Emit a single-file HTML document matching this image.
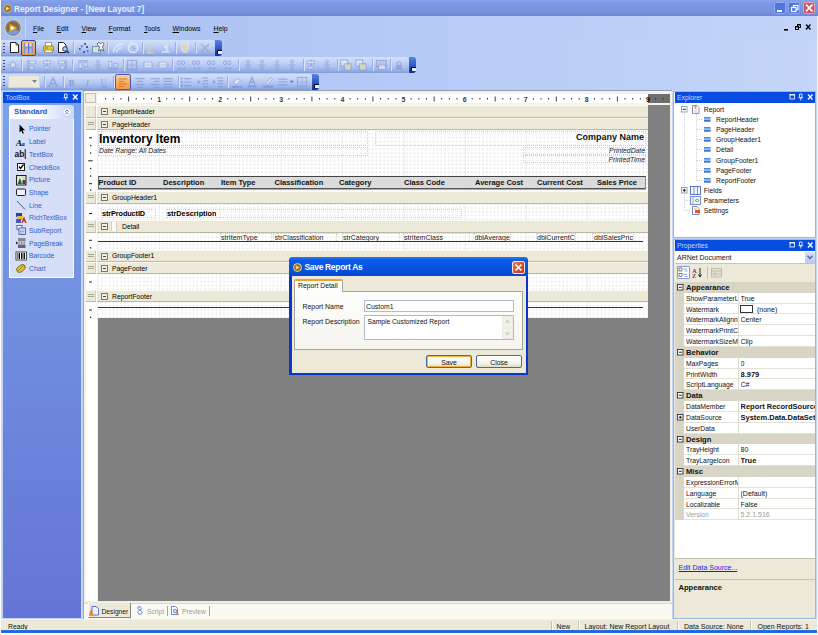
<!DOCTYPE html>
<html><head><meta charset="utf-8"><title>Report Designer</title>
<style>
*{box-sizing:border-box;margin:0;padding:0}
html,body{width:818px;height:635px;overflow:hidden;background:#fff}
body{position:relative;font-family:"Liberation Sans","DejaVu Sans",sans-serif;font-size:7px;color:#000;line-height:1}
.a{position:absolute}
.t{position:absolute;white-space:nowrap;line-height:9px}
u{text-decoration:underline}
svg{position:absolute;overflow:visible}
/* frame */
#title{left:1px;top:0;width:817px;height:16px;background:linear-gradient(#87a3ea 0,#7e9ae4 3px,#7995e1 8px,#7791df 12px,#6f89d8 15px,#6b85d4 16px)}
#title .t{left:13px;top:4.500px;color:#e8eefc;font-weight:bold;font-size:8.25px;line-height:10px}
.wb{position:absolute;top:2px;width:12px;height:12px;border-radius:2px;border:1px solid #93a8ea}
#menubar{left:1px;top:16px;width:817px;height:24px;background:linear-gradient(90deg,#a9c0f3,#b6caf6 50%,#c2d4f8)}
#menubar .t{top:8px;font-size:6.9px}
#tbarea{left:1px;top:40px;width:817px;height:51px;background:linear-gradient(90deg,#a9c0f3,#b6caf6 50%,#c4d5f8)}
.tb{position:absolute;left:0;height:16px;border-radius:0 2px 2px 0;background:linear-gradient(#d3e0fb,#c4d4f8 30%,#b0c4f1 60%,#97afe6 85%,#7e99db)}
.tbend{position:absolute;width:7px;height:16px;border-radius:0 3px 3px 0;background:linear-gradient(#5c83dd,#2f5bc9 50%,#0d2f9e)}
.tbend:after{content:"";position:absolute;left:2px;top:10px;width:4px;height:3px;background:#fff;border-top:1px solid #000;border-left:1px solid #000;opacity:.9}
.grip{position:absolute;left:2px;width:2px;height:11px;background:repeating-linear-gradient(#3a4f8f 0,#3a4f8f 1px,transparent 1px,transparent 3px)}
.sep{position:absolute;width:1px;height:12px;background:#98aee2;box-shadow:1px 0 0 #d8e3fa}
.di{position:absolute;width:10px;height:10px;opacity:.55}
.bh{background:#ece9d8;border-top:1px solid #fbfaf5;border-bottom:1px solid #bdb9a6}
.bhl{background:#ece9d8;border-top:1px solid #fbfaf5;border-bottom:1px solid #bdb9a6;border-right:1px solid #d0ccba}
.cb{width:7px;height:7px;border:1px solid #7b7868;background:#f4f2e6}
.cb:after{content:"";position:absolute;left:1px;top:2px;width:3px;height:1px;background:#444}
.ol{border:1px dotted #cfcfcf}
.hd{top:177.500px;font-size:7.500px;font-weight:bold;line-height:10px;color:#111}
.dt{top:233px;font-size:7px;line-height:9px;height:7.600px;overflow:hidden;color:#222}
.ss{top:621px;width:1px;height:9px;background:#c5c2b2;box-shadow:1px 0 0 #fff}
.dic{transform:scale(1.15);transform-origin:5px 5px}
</style></head><body>
<div id="title" class="a"><div class="t">Report Designer - [New Layout 7]</div>
<svg style="left:2px;top:3.5px" width="9" height="9"><circle cx="4.5" cy="4.5" r="4" fill="#8f6a3a" stroke="#d9c9a0" stroke-width=".8"/><path d="M2.8 2.3 L7.2 4.5 L2.8 6.7Z" fill="#ffb400"/><circle cx="4.2" cy="4.5" r="1.1" fill="#fff6c0"/></svg>
<div class="wb" style="left:773px;background:#4d75de"></div>
<div class="wb" style="left:787px;background:#4d75de"></div>
<div class="wb" style="left:802px;background:#c95563;border-color:#dba3ad"></div>
<svg style="left:773px;top:2px" width="42" height="12"><rect x="3" y="8" width="5" height="2" fill="#fff"/><rect x="19.5" y="3.5" width="4.5" height="4" fill="none" stroke="#fff" stroke-width="1.2"/><rect x="17.500" y="5.500" width="4.500" height="4" fill="#4d75de" stroke="#fff" stroke-width="1.200"/><path d="M32 2.500 L38.500 9.500 M38.500 2.500 L32 9.500" stroke="#fff" stroke-width="1.800"/></svg>
</div>
<div id="menubar" class="a">
<div class="t" style="left:32px"><u>F</u>ile</div>
<div class="t" style="left:55.500px"><u>E</u>dit</div>
<div class="t" style="left:80.500px"><u>V</u>iew</div>
<div class="t" style="left:107.500px"><u>F</u>ormat</div>
<div class="t" style="left:143px"><u>T</u>ools</div>
<div class="t" style="left:171.500px"><u>W</u>indows</div>
<div class="t" style="left:212.500px"><u>H</u>elp</div>
<div class="a" style="left:24px;top:2px;width:1px;height:20px;background:#c9d8f8"></div>
<svg style="left:3px;top:3px" width="18" height="18"><circle cx="9" cy="9" r="8.300" fill="#6d7fae" stroke="#d8cdb0" stroke-width="1.200"/><circle cx="9" cy="9" r="6.800" fill="#7d6a52" stroke="#a08a60" stroke-width=".8"/><path d="M3.500 13.500 A7 7 0 0 0 15 12 L9 9Z" fill="#6f9fe8"/><path d="M5.500 4.500 L14 9 L5.500 13Z" fill="#f28c00"/><path d="M6.500 6.500 L11.500 9 L6.500 11.500Z" fill="#ffe27a"/><circle cx="8" cy="9" r="1.500" fill="#fffbe0"/></svg>
<svg style="left:781px;top:7px" width="30" height="10"><rect x="2" y="6" width="4" height="1.6" fill="#000"/><rect x="15.5" y="1.5" width="3" height="3" fill="none" stroke="#000" stroke-width="1"/><rect x="15" y="1" width="4" height="1.5" fill="#000"/><rect x="13.5" y="3.5" width="3" height="3" fill="#c2d4f8" stroke="#000" stroke-width="1"/><rect x="13" y="3" width="4" height="1.5" fill="#000"/><path d="M24 1.500 L28.500 6.500 M28.500 1.500 L24 6.500" stroke="#000" stroke-width="1.300"/></svg>
</div>
<div id="tbarea" class="a">
<div class="tb" style="top:0;width:214px"></div><div class="tbend" style="left:214px;top:0"></div><div class="grip" style="top:3px"></div>
<div class="tb" style="top:17px;width:408px"></div><div class="tbend" style="left:408px;top:17px"></div><div class="grip" style="top:20px"></div>
<div class="tb" style="top:33.500px;width:311px"></div><div class="tbend" style="left:311px;top:33.500px"></div><div class="grip" style="top:36px"></div>
<!-- row1 icons -->
<svg style="left:9px;top:2px" width="10" height="11"><path d="M.5 .5 H6 L8.500 3 V10.500 H.5Z" fill="#fff" stroke="#222" stroke-width="1"/><path d="M6 .5 V3 H8.500" fill="none" stroke="#222" stroke-width=".8"/></svg>
<div class="a" style="left:20px;top:0;width:15px;height:16px;border:1px solid #34489f;border-radius:2px;background:linear-gradient(#f9b772,#f3923c);"></div>
<svg style="left:23px;top:3px" width="9" height="10"><rect x="0" y="0" width="9" height="10" fill="#8796cc"/><rect x="1.500" y="0" width="6" height="3.500" fill="#dfe5f6"/><rect x="1.500" y="5.500" width="6" height="4.500" fill="#aebbe4"/><rect x="4" y="0" width="1.300" height="10" fill="#6474bb"/></svg>
<svg style="left:42px;top:2px" width="11" height="11"><rect x="2.500" y=".5" width="6" height="4" fill="#fff" stroke="#8a8a6a" stroke-width=".8"/><rect x=".5" y="4" width="10" height="5" rx="1" fill="#e8c83a" stroke="#8a7a20" stroke-width=".8"/><rect x="2" y="8" width="7" height="2.500" fill="#fffbe0" stroke="#8a7a20" stroke-width=".6"/><rect x="2" y="5.500" width="3" height="1" fill="#3aa860"/></svg>
<svg style="left:57px;top:2px" width="12" height="12"><path d="M.5 .5 H5.500 L8 3 V10.500 H.5Z" fill="#fff" stroke="#222" stroke-width="1"/><circle cx="7" cy="7" r="2.300" fill="#9fd8f0" stroke="#224" stroke-width=".9"/><path d="M8.700 8.700 L11 11" stroke="#224" stroke-width="1.300"/></svg>
<div class="sep" style="left:72px;top:2px"></div>
<svg style="left:77px;top:3px" width="11" height="11"><g fill="#4a56a8"><rect x="6" y="0" width="2" height="2"/><rect x="8" y="3" width="2" height="2"/><rect x="1" y="5" width="2" height="2"/><rect x="5" y="8" width="2" height="2"/><rect x="9" y="7" width="1.500" height="1.500"/><rect x="3" y="2.500" width="1.500" height="1.500"/></g><path d="M2 6 L7 1 M2 6 L6 9" stroke="#9aa4d8" stroke-width=".6" fill="none"/></svg>
<svg style="left:91px;top:1px" width="13" height="13"><rect x=".5" y="5.500" width="8" height="6.500" fill="#cfe6e8" stroke="#5f8a94" stroke-width=".8"/><path d="M5 3 L7 1 L8.500 3 L10.500 1 L12 3 L10.500 6 L12 10 L9 8.500 L6.500 10 L7.500 6Z" fill="#f4f4f4" stroke="#555" stroke-width=".8"/></svg>

<div class="sep" style="left:106px;top:2px"></div>
<svg class="dic" style="left:112px;top:3px" width="10" height="10"><path d="M1 9 A7 7 0 0 1 9 2 M3.500 9 A4.500 4.500 0 0 1 8 5" fill="none" stroke="#e6edfb" stroke-width="1.300" opacity=".8"/></svg>
<svg class="dic" style="left:127px;top:3px" width="10" height="10"><circle cx="5" cy="5" r="4" fill="none" stroke="#e6edfb" stroke-width="1.300" opacity=".8"/><path d="M5 3 V5.500 H7" stroke="#8499cf" stroke-width=".8" fill="none" opacity=".7"/></svg>
<div class="sep" style="left:140.5px;top:2px"></div>
<svg class="dic" style="left:145px;top:3px" width="10" height="10"><path d="M3 1 V9 M1.500 9 H8" stroke="#d9cfa8" stroke-width="1.500" opacity=".8" fill="none"/></svg>
<svg class="dic" style="left:159px;top:3px" width="10" height="10"><path d="M2 8.500 H9 M6.500 2 V8.500 M4 4 H6.500" stroke="#e6edfb" stroke-width="1.400" opacity=".8" fill="none"/></svg>
<div class="sep" style="left:174px;top:2px"></div>
<svg class="dic" style="left:179px;top:3px" width="10" height="10"><path d="M2 1 H8 V6 A3 3 0 0 1 2 6Z" fill="#e8dca8" stroke="#e6edfb" stroke-width=".8" opacity=".7"/></svg>
<div class="sep" style="left:193.5px;top:2px"></div>
<svg class="dic" style="left:199px;top:3px" width="10" height="10"><path d="M1.500 1.500 L8.500 8.500 M8.500 1.500 L1.500 8.500" stroke="#93a3cc" stroke-width="1.200" opacity=".8"/></svg>
<svg class="dic" style="left:7px;top:20px" width="10" height="10"><circle cx="5" cy="5" r="2.300" fill="#e6edfb" stroke="#8499cf" stroke-width=".8" opacity=".7"/><path d="M5 0 V2 M5 8 V10 M0 5 H2 M8 5 H10 M1.500 1.500 L3 3 M7 7 L8.500 8.500 M8.500 1.500 L7 3 M1.500 8.500 L3 7" stroke="#8499cf" stroke-width=".7" opacity=".6"/></svg>
<div class="sep" style="left:20px;top:19px"></div>
<svg class="dic" style="left:26px;top:20px" width="10" height="10"><path d="M1.500 .5 V9.500" stroke="#8499cf" stroke-width="1" opacity=".75"/><rect x="3" y="1.500" width="5" height="2.500" fill="#e6edfb" stroke="#8499cf" stroke-width=".7" opacity=".7"/><rect x="3" y="6" width="3.500" height="2.500" fill="#e6edfb" stroke="#8499cf" stroke-width=".7" opacity=".7"/></svg>
<svg class="dic" style="left:41px;top:20px" width="10" height="10"><path d="M5 .5 V9.500" stroke="#8499cf" stroke-width="1" opacity=".75"/><rect x="2" y="1.500" width="6" height="2.500" fill="#e6edfb" stroke="#8499cf" stroke-width=".7" opacity=".7"/><rect x="3" y="6" width="4" height="2.500" fill="#e6edfb" stroke="#8499cf" stroke-width=".7" opacity=".7"/></svg>
<svg class="dic" style="left:56px;top:20px" width="10" height="10"><path d="M8.500 .5 V9.500" stroke="#8499cf" stroke-width="1" opacity=".75"/><rect x="2" y="1.500" width="5" height="2.500" fill="#e6edfb" stroke="#8499cf" stroke-width=".7" opacity=".7"/><rect x="3.500" y="6" width="3.500" height="2.500" fill="#e6edfb" stroke="#8499cf" stroke-width=".7" opacity=".7"/></svg>
<div class="sep" style="left:71px;top:19px"></div>
<svg class="dic" style="left:77px;top:20px" width="10" height="10"><path d="M.5 1.500 H9.500" stroke="#8499cf" stroke-width="1" opacity=".75"/><rect x="1.500" y="3" width="2.500" height="5" fill="#e6edfb" stroke="#8499cf" stroke-width=".7" opacity=".7"/><rect x="6" y="3" width="2.500" height="3.500" fill="#e6edfb" stroke="#8499cf" stroke-width=".7" opacity=".7"/></svg>
<svg class="dic" style="left:92px;top:20px" width="10" height="10"><circle cx="5" cy="2" r="1.300" fill="none" stroke="#8499cf" stroke-width=".7" opacity=".75"/><circle cx="5" cy="8" r="1.300" fill="none" stroke="#8499cf" stroke-width=".7" opacity=".75"/><path d="M5 3.500 V6.500 M2 5 H8" stroke="#8499cf" stroke-width=".7" opacity=".7"/></svg>
<svg class="dic" style="left:107px;top:20px" width="10" height="10"><path d="M.5 8.500 H9.500" stroke="#8499cf" stroke-width="1" opacity=".75"/><rect x="1.500" y="2" width="2.500" height="5" fill="#e6edfb" stroke="#8499cf" stroke-width=".7" opacity=".7"/><rect x="6" y="3.500" width="2.500" height="3.500" fill="#e6edfb" stroke="#8499cf" stroke-width=".7" opacity=".7"/></svg>
<div class="sep" style="left:121.5px;top:19px"></div>
<svg class="dic" style="left:126px;top:20px" width="10" height="10"><rect x="1" y="1" width="8" height="8" fill="none" stroke="#8499cf" stroke-width=".9" opacity=".7"/><path d="M1 5 H9 M5 1 V9" stroke="#8499cf" stroke-width=".7" opacity=".6"/></svg>
<svg class="dic" style="left:142px;top:20px" width="10" height="10"><rect x="1.500" y="2.500" width="7" height="5" fill="#e6edfb" stroke="#8499cf" stroke-width=".8" opacity=".7" stroke-dasharray="1.500 1"/><path d="M0 5 H10" stroke="#8499cf" stroke-width=".6" opacity=".6"/></svg>
<svg class="dic" style="left:157px;top:20px" width="10" height="10"><rect x="1.500" y="2.500" width="7" height="5" fill="#e6edfb" stroke="#8499cf" stroke-width=".8" opacity=".7" stroke-dasharray="1.500 1"/><path d="M0 5 H10" stroke="#8499cf" stroke-width=".6" opacity=".6"/></svg>
<div class="sep" style="left:171px;top:19px"></div>
<svg class="dic" style="left:176px;top:20px" width="10" height="10"><ellipse cx="2.300" cy="3" rx="1.300" ry="1.800" fill="none" stroke="#8499cf" stroke-width=".7" opacity=".85"/><ellipse cx="6" cy="3" rx="1.300" ry="1.800" fill="none" stroke="#8499cf" stroke-width=".7" opacity=".85"/><path d="M2 8 L3.500 6.500 M2 8 L3.500 9.500 M2 8 H8 M8 8 L6.500 6.500 M8 8 L6.500 9.500" stroke="#8499cf" stroke-width=".6" opacity=".7" fill="none"/></svg>
<svg class="dic" style="left:191px;top:20px" width="10" height="10"><ellipse cx="2.300" cy="3" rx="1.300" ry="1.800" fill="none" stroke="#8499cf" stroke-width=".7" opacity=".85"/><ellipse cx="6" cy="3" rx="1.300" ry="1.800" fill="none" stroke="#8499cf" stroke-width=".7" opacity=".85"/><path d="M2 8 L3.500 6.500 M2 8 L3.500 9.500 M2 8 H8 M8 8 L6.500 6.500 M8 8 L6.500 9.500" stroke="#8499cf" stroke-width=".6" opacity=".7" fill="none"/></svg>
<svg class="dic" style="left:206px;top:20px" width="10" height="10"><ellipse cx="2.300" cy="3" rx="1.300" ry="1.800" fill="none" stroke="#8499cf" stroke-width=".7" opacity=".85"/><ellipse cx="6" cy="3" rx="1.300" ry="1.800" fill="none" stroke="#8499cf" stroke-width=".7" opacity=".85"/><path d="M2 8 L3.500 6.500 M2 8 L3.500 9.500 M2 8 H8 M8 8 L6.500 6.500 M8 8 L6.500 9.500" stroke="#8499cf" stroke-width=".6" opacity=".7" fill="none"/></svg>
<svg class="dic" style="left:222px;top:20px" width="10" height="10"><ellipse cx="2.300" cy="3" rx="1.300" ry="1.800" fill="none" stroke="#8499cf" stroke-width=".7" opacity=".85"/><ellipse cx="6" cy="3" rx="1.300" ry="1.800" fill="none" stroke="#8499cf" stroke-width=".7" opacity=".85"/><path d="M2 8 L3.500 6.500 M2 8 L3.500 9.500 M2 8 H8 M8 8 L6.500 6.500 M8 8 L6.500 9.500" stroke="#8499cf" stroke-width=".6" opacity=".7" fill="none"/></svg>
<div class="sep" style="left:236.5px;top:19px"></div>
<svg class="dic" style="left:242px;top:20px" width="10" height="10"><circle cx="5" cy="2" r="1.300" fill="none" stroke="#8499cf" stroke-width=".7" opacity=".75"/><circle cx="5" cy="8" r="1.300" fill="none" stroke="#8499cf" stroke-width=".7" opacity=".75"/><path d="M5 3.500 V6.500 M2 5 H8" stroke="#8499cf" stroke-width=".7" opacity=".7"/></svg>
<svg class="dic" style="left:256px;top:20px" width="10" height="10"><circle cx="5" cy="2" r="1.300" fill="none" stroke="#8499cf" stroke-width=".7" opacity=".75"/><circle cx="5" cy="8" r="1.300" fill="none" stroke="#8499cf" stroke-width=".7" opacity=".75"/><path d="M5 3.500 V6.500 M2 5 H8" stroke="#8499cf" stroke-width=".7" opacity=".7"/></svg>
<svg class="dic" style="left:271px;top:20px" width="10" height="10"><circle cx="5" cy="2" r="1.300" fill="none" stroke="#8499cf" stroke-width=".7" opacity=".75"/><circle cx="5" cy="8" r="1.300" fill="none" stroke="#8499cf" stroke-width=".7" opacity=".75"/><path d="M5 3.500 V6.500 M2 5 H8" stroke="#8499cf" stroke-width=".7" opacity=".7"/></svg>
<svg class="dic" style="left:286px;top:20px" width="10" height="10"><circle cx="5" cy="2" r="1.300" fill="none" stroke="#8499cf" stroke-width=".7" opacity=".75"/><circle cx="5" cy="8" r="1.300" fill="none" stroke="#8499cf" stroke-width=".7" opacity=".75"/><path d="M5 3.500 V6.500 M2 5 H8" stroke="#8499cf" stroke-width=".7" opacity=".7"/></svg>
<div class="sep" style="left:301.5px;top:19px"></div>
<svg class="dic" style="left:305px;top:20px" width="10" height="10"><path d="M5 .5 V9.500" stroke="#8499cf" stroke-width="1" opacity=".75"/><rect x="2" y="1.500" width="6" height="2.500" fill="#e6edfb" stroke="#8499cf" stroke-width=".7" opacity=".7"/><rect x="3" y="6" width="4" height="2.500" fill="#e6edfb" stroke="#8499cf" stroke-width=".7" opacity=".7"/></svg>
<svg class="dic" style="left:321px;top:20px" width="10" height="10"><circle cx="5" cy="2" r="1.300" fill="none" stroke="#8499cf" stroke-width=".7" opacity=".75"/><circle cx="5" cy="8" r="1.300" fill="none" stroke="#8499cf" stroke-width=".7" opacity=".75"/><path d="M5 3.500 V6.500 M2 5 H8" stroke="#8499cf" stroke-width=".7" opacity=".7"/></svg>
<div class="sep" style="left:336px;top:19px"></div>
<svg class="dic" style="left:340px;top:20px" width="10" height="10"><rect x=".5" y=".5" width="6" height="5.500" fill="#e6edfb" stroke="#8499cf" stroke-width=".9" opacity=".7"/><rect x="3.500" y="4" width="6" height="5.500" fill="#e6e0b0" stroke="#8499cf" stroke-width=".9" opacity=".7"/></svg>
<svg class="dic" style="left:355px;top:20px" width="10" height="10"><rect x=".5" y=".5" width="6" height="5.500" fill="#e6edfb" stroke="#8499cf" stroke-width=".9" opacity=".7"/><rect x="3.500" y="4" width="6" height="5.500" fill="#e6e0b0" stroke="#8499cf" stroke-width=".9" opacity=".7"/></svg>
<div class="sep" style="left:370.5px;top:19px"></div>
<svg class="dic" style="left:375px;top:20px" width="10" height="10"><rect x="1" y="1" width="8.500" height="5.500" fill="#cdb8d8" stroke="#8499cf" stroke-width=".8" opacity=".7"/><rect x="3" y="5" width="6" height="4" fill="#e6edfb" stroke="#8499cf" stroke-width=".7" opacity=".7"/></svg>
<div class="sep" style="left:389px;top:19px"></div>
<svg class="dic" style="left:393px;top:20px" width="10" height="10"><rect x="2.500" y="5" width="5" height="4" fill="#8499cf" opacity=".7"/><path d="M3.500 5 V3.500 A1.500 1.500 0 0 1 6.500 3.500 V5" fill="none" stroke="#8499cf" stroke-width=".8" opacity=".7"/></svg>
<div class="sep" style="left:42.5px;top:35.5px"></div>
<svg class="dic" style="left:47px;top:36.5px" width="10" height="10"><path d="M1.500 9 L5 1.500 L8.500 9 M3 6.500 H7" stroke="#8499cf" stroke-width="1.100" fill="none" opacity=".8"/></svg>
<div class="sep" style="left:61.5px;top:35.5px"></div>
<svg class="dic" style="left:66px;top:36.5px" width="10" height="10"><text x="2" y="8.500" font-size="8" font-weight="bold" fill="#8499cf" opacity=".85" font-family="Liberation Serif,serif">B</text></svg>
<svg class="dic" style="left:82px;top:36.5px" width="10" height="10"><text x="3" y="8.500" font-size="8" font-style="italic" fill="#8499cf" opacity=".85" font-family="Liberation Serif,serif">I</text></svg>
<svg class="dic" style="left:98px;top:36.5px" width="10" height="10"><text x="2" y="8" font-size="7.500" fill="#8499cf" opacity=".85" font-family="Liberation Serif,serif" text-decoration="underline">U</text><path d="M2 9.500 H8" stroke="#8499cf" stroke-width=".7" opacity=".8"/></svg>
<div class="sep" style="left:111.5px;top:35.5px"></div>
<svg class="dic" style="left:134px;top:36.5px" width="10" height="10"><path d="M1 2 H9 M2.500 4.500 H7.500 M1 7 H9 M2.500 9.500 H7.500" stroke="#8499cf" stroke-width="1" opacity=".75"/></svg>
<svg class="dic" style="left:149px;top:36.5px" width="10" height="10"><path d="M1 2 H9 M4 4.500 H9 M1 7 H9 M4 9.500 H9" stroke="#8499cf" stroke-width="1" opacity=".75"/></svg>
<svg class="dic" style="left:162px;top:36.5px" width="10" height="10"><path d="M1 2 H9 M1 4.500 H9 M1 7 H9 M1 9.500 H9" stroke="#8499cf" stroke-width="1" opacity=".75"/></svg>
<div class="sep" style="left:176.5px;top:35.5px"></div>
<svg class="dic" style="left:180px;top:36.5px" width="10" height="10"><path d="M3.500 2 H9.500 M3.500 5 H9.500 M3.500 8 H9.500" stroke="#8499cf" stroke-width="1" opacity=".8"/><path d="M.5 2 H2 M.5 5 H2 M.5 8 H2" stroke="#6f83c4" stroke-width="1.200" opacity=".8"/></svg>
<svg class="dic" style="left:197px;top:36.5px" width="10" height="10"><path d="M4 1.500 H9.500 M5 4 H9.500 M4 6.500 H9.500 M5 9 H9.500" stroke="#8499cf" stroke-width="1" opacity=".8"/><path d="M.5 3 L3 5 L.5 7Z" fill="#8499cf" opacity=".8"/></svg>
<svg class="dic" style="left:212px;top:36.5px" width="10" height="10"><path d="M4 1.500 H9.500 M5 4 H9.500 M4 6.500 H9.500 M5 9 H9.500" stroke="#8499cf" stroke-width="1" opacity=".8"/><path d="M.5 3 L3 5 L.5 7Z" fill="#8499cf" opacity=".8"/></svg>
<div class="sep" style="left:225.5px;top:35.5px"></div>
<svg class="dic" style="left:231px;top:36.5px" width="10" height="10"><path d="M2 5 L5.500 1.500 L8 4 L4.500 7.500Z" fill="#e6edfb" stroke="#8499cf" stroke-width=".8" opacity=".8"/><rect x=".5" y="8.500" width="9" height="1.500" fill="#7b8fe0" opacity=".8"/></svg>
<svg class="dic" style="left:246px;top:36.5px" width="10" height="10"><path d="M2.500 7 L5 1 L7.500 7 M3.500 5 H6.500" stroke="#8499cf" stroke-width="1" fill="none" opacity=".85"/><rect x="1" y="8" width="8" height="1.800" fill="#8499cf" opacity=".8"/></svg>
<svg class="dic" style="left:262px;top:36.5px" width="10" height="10"><path d="M3 6.500 L7.500 1 L9 2.500 L4.500 7.500Z" fill="#e6edfb" stroke="#8499cf" stroke-width=".7" opacity=".8"/><rect x=".5" y="8" width="9" height="2" fill="#8499cf" opacity=".85"/></svg>
<svg class="dic" style="left:278px;top:36.5px" width="14" height="10"><path d="M0 2.500 H8 M0 5 H8 M0 7.500 H8" stroke="#8499cf" stroke-width="1" opacity=".75"/><path d="M10 4 H13.500 L11.750 6Z" fill="#55659a" opacity=".85"/></svg>
<svg class="dic" style="left:296px;top:36.5px" width="10" height="10"><rect x="1" y="1" width="8" height="8" fill="none" stroke="#8499cf" stroke-width=".9" opacity=".7"/><path d="M1 5 H9 M5 1 V9" stroke="#8499cf" stroke-width=".7" opacity=".6"/></svg>
<div class="a" style="left:7px;top:34.500px;width:32px;height:13px;background:#ece9d8;border:1px solid #c8d3ee"></div>
<svg style="left:31px;top:39.500px" width="6" height="4"><path d="M0 0 H5 L2.500 3Z" fill="#7f7f8f"/></svg>
<div class="a" style="left:114px;top:33.500px;width:16px;height:16px;border:1px solid #4a5fb0;border-radius:2px;background:linear-gradient(#fbcf9e,#f6a85c 60%,#f29a44)"></div>
<svg style="left:117px;top:36.500px" width="10" height="10"><path d="M1 2 H9 M1 4.500 H6 M1 7 H9 M1 9.500 H6" stroke="#d9772a" stroke-width="1" opacity=".9"/></svg>

</div>
<div class="a" style="left:1px;top:91px;width:82px;height:528px;background:#c4d5f8"></div>
<div class="a" style="left:3px;top:92px;width:78px;height:526px;background:linear-gradient(#7ba2e7,#6375d6)"></div>
<div class="a" style="left:3px;top:92px;width:78px;height:11px;background:#074ce0"></div>
<div class="t" style="left:5.500px;top:93px;color:#c9d9fb;font-size:6.800px">ToolBox</div>
<svg style="left:62px;top:93px" width="18" height="9"><path d="M2.500 1 H5 V4.500 H2.500Z M1.500 4.800 H6 M3.750 5 V7.500" stroke="#e8eefc" stroke-width=".9" fill="none"/><path d="M11 1.500 L15.500 6.500 M15.500 1.500 L11 6.500" stroke="#fff" stroke-width="1.300"/></svg>
<div class="a" style="left:9px;top:105px;width:65px;height:14px;border-radius:3px 3px 0 0;background:linear-gradient(90deg,#fff,#fff 40%,#c9d6f8)"></div>
<div class="a" style="left:9px;top:119px;width:65px;height:159px;background:#d6dff7;border:1px solid #fff;border-top:none"></div>
<div class="t" style="left:14px;top:107px;font-size:7.700px;font-weight:bold;color:#2458c4;line-height:10px">Standard</div>
<svg style="left:62px;top:107px" width="10" height="10"><circle cx="5" cy="5" r="4.300" fill="#fff" stroke="#b8c8ee" stroke-width=".8"/><path d="M3.200 4.800 L5 3 L6.800 4.800 M3.200 7.300 L5 5.500 L6.800 7.300" stroke="#3560c0" stroke-width=".9" fill="none"/></svg>
<svg style="left:16px;top:123.5px" width="11" height="10"><path d="M3.500 .5 V8.500 L5.300 6.800 L6.700 9.800 L7.900 9.200 L6.500 6.300 L9 6.300Z" fill="#000"/></svg>
<div class="t" style="left:29px;top:124.0px;font-size:6.800px;color:#2f60c8">Pointer</div>
<svg style="left:16px;top:136.5px" width="11" height="10"><text x="0" y="8.500" font-size="9" font-weight="bold" font-style="italic" font-family="Liberation Serif,serif" fill="#111">A</text><text x="5.500" y="8.500" font-size="6.500" font-weight="bold" font-style="italic" font-family="Liberation Serif,serif" fill="#111">a</text></svg>
<div class="t" style="left:29px;top:137.0px;font-size:6.800px;color:#2f60c8">Label</div>
<svg style="left:16px;top:149px" width="11" height="10"><text x="-1.500" y="8.300" font-size="8.500" font-weight="bold" font-family="Liberation Sans,sans-serif" fill="#111">ab</text><rect x="8.700" y="0" width="1" height="10" fill="#111"/></svg>
<div class="t" style="left:29px;top:149.5px;font-size:6.800px;color:#2f60c8">TextBox</div>
<svg style="left:16px;top:162px" width="11" height="10"><rect x="1.500" y="1.500" width="7" height="7" fill="#fff" stroke="#222" stroke-width="1"/><path d="M3 4.500 L4.500 6.500 L7.500 2.500" stroke="#000" stroke-width="1.300" fill="none"/></svg>
<div class="t" style="left:29px;top:162.5px;font-size:6.800px;color:#2f60c8">CheckBox</div>
<svg style="left:16px;top:174.5px" width="11" height="10"><rect x=".5" y=".5" width="9.500" height="9.500" fill="#dfe6d8" stroke="#222" stroke-width="1"/><path d="M1.500 9 L4 3 L6 9Z" fill="#1f6a2a"/><rect x="6.500" y="5" width="3" height="4" fill="#444"/><circle cx="7.500" cy="2.500" r="1" fill="#e8d22a"/></svg>
<div class="t" style="left:29px;top:175.0px;font-size:6.800px;color:#2f60c8">Picture</div>
<svg style="left:16px;top:187px" width="11" height="10"><rect x=".5" y="2" width="9" height="6.500" rx="1" fill="#eef1fb" stroke="#222" stroke-width="1"/></svg>
<div class="t" style="left:29px;top:187.5px;font-size:6.800px;color:#2f60c8">Shape</div>
<svg style="left:16px;top:200px" width="11" height="10"><path d="M1 1 L9 9.500" stroke="#333" stroke-width=".8"/></svg>
<div class="t" style="left:29px;top:200.5px;font-size:6.800px;color:#2f60c8">Line</div>
<svg style="left:16px;top:212.5px" width="11" height="10"><rect x="0" y="0" width="6" height="4" fill="#2f3f9a"/><rect x="1" y="3" width="6" height="4" fill="#d8c23a"/><rect x="0" y="6" width="5" height="4" fill="#4a5ab0"/><path d="M6 10 L8 5 L10 10 M6.800 8 H9.200" stroke="#d01818" stroke-width="1.100" fill="none"/></svg>
<div class="t" style="left:29px;top:213.0px;font-size:6.800px;color:#2f60c8">RichTextBox</div>
<svg style="left:16px;top:225px" width="11" height="10"><rect x="1" y=".5" width="5" height="4" fill="#fff" stroke="#2f4aa8" stroke-width=".8"/><rect x="3" y="3" width="6.500" height="6.500" fill="#e8ecf8" stroke="#2f4aa8" stroke-width=".8"/><path d="M4 5 H8.500 M4 6.500 H8.500 M4 8 H8.500" stroke="#6a7ac0" stroke-width=".6"/></svg>
<div class="t" style="left:29px;top:225.5px;font-size:6.800px;color:#2f60c8">SubReport</div>
<svg style="left:16px;top:238px" width="11" height="10"><rect x="2" y="0" width="7.500" height="3.500" fill="#888"/><rect x="2" y="6.500" width="7.500" height="3.500" fill="#666"/><path d="M0 5 H10" stroke="#222" stroke-width=".8" stroke-dasharray="1.500 1"/><path d="M0 3.500 L2 5 L0 6.500Z" fill="#222"/></svg>
<div class="t" style="left:29px;top:238.5px;font-size:6.800px;color:#2f60c8">PageBreak</div>
<svg style="left:16px;top:250.5px" width="11" height="10"><rect x="0" y="1" width="10.500" height="8" fill="#fff" stroke="#222" stroke-width=".8"/><path d="M2 2 V8 M3.500 2 V8 M5.500 2 V8 M7 2 V8 M8.500 2 V8" stroke="#111" stroke-width="1"/></svg>
<div class="t" style="left:29px;top:251.0px;font-size:6.800px;color:#2f60c8">Barcode</div>
<svg style="left:16px;top:263px" width="11" height="10"><ellipse cx="5" cy="5.500" rx="4.800" ry="3" transform="rotate(-35 5 5.500)" fill="#e0c23a" stroke="#6a5a10" stroke-width=".8"/><path d="M2 8 L7.500 2.500" stroke="#8a7420" stroke-width=".8"/></svg>
<div class="t" style="left:29px;top:263.5px;font-size:6.800px;color:#2f60c8">Chart</div>
<div class="a" id="designer" style="left:83px;top:90px;width:589px;height:529px;background:#f5f3e8;border-top:1px solid #8f9bb5;border-left:1px solid #9aa5c0"></div>
<div class="a" style="left:85.500px;top:105px;width:11px;height:496px;background:#fff"></div>
<div class="a" style="left:85px;top:92.500px;width:11px;height:10.500px;background:#f1efe3;border:1px solid #c4c1b0"></div>
<div class="a" style="left:96.500px;top:93.500px;width:551.5px;height:9.500px;background:#fff"></div>
<div class="a" style="left:648px;top:94px;width:22px;height:9px;background:#6e6e6e"></div>
<svg style="left:0;top:94px" width="818" height="9"><rect x="105.1" y="4" width="1" height="1.500" fill="#333"/><rect x="112.8" y="4" width="1" height="1.500" fill="#333"/><rect x="120.4" y="4" width="1" height="1.500" fill="#333"/><rect x="128.1" y="2.500" width="1" height="5" fill="#444"/><rect x="135.7" y="4" width="1" height="1.500" fill="#333"/><rect x="143.3" y="4" width="1" height="1.500" fill="#333"/><rect x="151.0" y="4" width="1" height="1.500" fill="#333"/><text x="159.1" y="7.600" font-size="7" font-weight="bold" text-anchor="middle" fill="#3a3a3a" font-family="Liberation Sans,sans-serif">1</text><rect x="166.2" y="4" width="1" height="1.500" fill="#333"/><rect x="173.9" y="4" width="1" height="1.500" fill="#333"/><rect x="181.5" y="4" width="1" height="1.500" fill="#333"/><rect x="189.2" y="2.500" width="1" height="5" fill="#444"/><rect x="196.8" y="4" width="1" height="1.500" fill="#333"/><rect x="204.4" y="4" width="1" height="1.500" fill="#333"/><rect x="212.1" y="4" width="1" height="1.500" fill="#333"/><text x="220.2" y="7.600" font-size="7" font-weight="bold" text-anchor="middle" fill="#3a3a3a" font-family="Liberation Sans,sans-serif">2</text><rect x="227.3" y="4" width="1" height="1.500" fill="#333"/><rect x="235.0" y="4" width="1" height="1.500" fill="#333"/><rect x="242.6" y="4" width="1" height="1.500" fill="#333"/><rect x="250.2" y="2.500" width="1" height="5" fill="#444"/><rect x="257.9" y="4" width="1" height="1.500" fill="#333"/><rect x="265.5" y="4" width="1" height="1.500" fill="#333"/><rect x="273.2" y="4" width="1" height="1.500" fill="#333"/><text x="281.3" y="7.600" font-size="7" font-weight="bold" text-anchor="middle" fill="#3a3a3a" font-family="Liberation Sans,sans-serif">3</text><rect x="288.4" y="4" width="1" height="1.500" fill="#333"/><rect x="296.1" y="4" width="1" height="1.500" fill="#333"/><rect x="303.7" y="4" width="1" height="1.500" fill="#333"/><rect x="311.4" y="2.500" width="1" height="5" fill="#444"/><rect x="319.0" y="4" width="1" height="1.500" fill="#333"/><rect x="326.6" y="4" width="1" height="1.500" fill="#333"/><rect x="334.3" y="4" width="1" height="1.500" fill="#333"/><text x="342.4" y="7.600" font-size="7" font-weight="bold" text-anchor="middle" fill="#3a3a3a" font-family="Liberation Sans,sans-serif">4</text><rect x="349.5" y="4" width="1" height="1.500" fill="#333"/><rect x="357.2" y="4" width="1" height="1.500" fill="#333"/><rect x="364.8" y="4" width="1" height="1.500" fill="#333"/><rect x="372.4" y="2.500" width="1" height="5" fill="#444"/><rect x="380.1" y="4" width="1" height="1.500" fill="#333"/><rect x="387.7" y="4" width="1" height="1.500" fill="#333"/><rect x="395.4" y="4" width="1" height="1.500" fill="#333"/><text x="403.5" y="7.600" font-size="7" font-weight="bold" text-anchor="middle" fill="#3a3a3a" font-family="Liberation Sans,sans-serif">5</text><rect x="410.6" y="4" width="1" height="1.500" fill="#333"/><rect x="418.3" y="4" width="1" height="1.500" fill="#333"/><rect x="425.9" y="4" width="1" height="1.500" fill="#333"/><rect x="433.6" y="2.500" width="1" height="5" fill="#444"/><rect x="441.2" y="4" width="1" height="1.500" fill="#333"/><rect x="448.8" y="4" width="1" height="1.500" fill="#333"/><rect x="456.5" y="4" width="1" height="1.500" fill="#333"/><text x="464.6" y="7.600" font-size="7" font-weight="bold" text-anchor="middle" fill="#3a3a3a" font-family="Liberation Sans,sans-serif">6</text><rect x="471.7" y="4" width="1" height="1.500" fill="#333"/><rect x="479.4" y="4" width="1" height="1.500" fill="#333"/><rect x="487.0" y="4" width="1" height="1.500" fill="#333"/><rect x="494.7" y="2.500" width="1" height="5" fill="#444"/><rect x="502.3" y="4" width="1" height="1.500" fill="#333"/><rect x="509.9" y="4" width="1" height="1.500" fill="#333"/><rect x="517.6" y="4" width="1" height="1.500" fill="#333"/><text x="525.7" y="7.600" font-size="7" font-weight="bold" text-anchor="middle" fill="#3a3a3a" font-family="Liberation Sans,sans-serif">7</text><rect x="532.8" y="4" width="1" height="1.500" fill="#333"/><rect x="540.5" y="4" width="1" height="1.500" fill="#333"/><rect x="548.1" y="4" width="1" height="1.500" fill="#333"/><rect x="555.8" y="2.500" width="1" height="5" fill="#444"/><rect x="563.4" y="4" width="1" height="1.500" fill="#333"/><rect x="571.0" y="4" width="1" height="1.500" fill="#333"/><rect x="578.7" y="4" width="1" height="1.500" fill="#333"/><text x="586.8" y="7.600" font-size="7" font-weight="bold" text-anchor="middle" fill="#3a3a3a" font-family="Liberation Sans,sans-serif">8</text><rect x="593.9" y="4" width="1" height="1.500" fill="#333"/><rect x="601.6" y="4" width="1" height="1.500" fill="#333"/><rect x="609.2" y="4" width="1" height="1.500" fill="#333"/><rect x="616.9" y="2.500" width="1" height="5" fill="#444"/><rect x="624.5" y="4" width="1" height="1.500" fill="#333"/><rect x="632.1" y="4" width="1" height="1.500" fill="#333"/><rect x="639.8" y="4" width="1" height="1.500" fill="#333"/><text x="647.9" y="7.600" font-size="7" font-weight="bold" text-anchor="middle" fill="#000" font-family="Liberation Sans,sans-serif">9</text><rect x="655.0" y="4" width="1" height="1.500" fill="#333"/><rect x="662.7" y="4" width="1" height="1.500" fill="#333"/></svg>
<div class="a" style="left:98px;top:105px;width:572px;height:496px;background:#808080"></div>
<div class="a bh" style="left:96.500px;top:105px;width:551.5px;height:13px"></div>
<div class="a bhl" style="left:85.500px;top:105px;width:10px;height:13px"></div>
<div class="a cb" style="left:101px;top:108px"></div>
<div class="t" style="left:112px;top:106.5px;font-size:6.800px;color:#000">ReportHeader</div>
<div class="a bh" style="left:96.500px;top:118px;width:551.5px;height:12px"></div>
<div class="a bhl" style="left:85.500px;top:118px;width:10px;height:12px"></div>
<div class="a" style="left:87.500px;top:122px;width:6px;height:1px;background:#a8a594;box-shadow:0 2px 0 #a8a594"></div>
<div class="a cb" style="left:101px;top:121px"></div>
<div class="t" style="left:112px;top:119.5px;font-size:6.800px;color:#000">PageHeader</div>
<div class="a" style="left:98px;top:130px;width:550px;height:61px;background-color:#fff;background-image:radial-gradient(circle at 1px 1px,#c9c9c9 0,#c9c9c9 .4px,transparent .8px);background-size:3.819px 3.819px;background-position:-1px 2.82px"></div>
<div class="a" style="left:159.1px;top:130px;width:1px;height:61px;background:#f1f0e8"></div>
<div class="a" style="left:220.2px;top:130px;width:1px;height:61px;background:#f1f0e8"></div>
<div class="a" style="left:281.3px;top:130px;width:1px;height:61px;background:#f1f0e8"></div>
<div class="a" style="left:342.4px;top:130px;width:1px;height:61px;background:#f1f0e8"></div>
<div class="a" style="left:403.5px;top:130px;width:1px;height:61px;background:#f1f0e8"></div>
<div class="a" style="left:464.6px;top:130px;width:1px;height:61px;background:#f1f0e8"></div>
<div class="a" style="left:525.7px;top:130px;width:1px;height:61px;background:#f1f0e8"></div>
<div class="a" style="left:586.8px;top:130px;width:1px;height:61px;background:#f1f0e8"></div>
<div class="a bh" style="left:96.500px;top:191px;width:551.5px;height:13px"></div>
<div class="a bhl" style="left:85.500px;top:191px;width:10px;height:13px"></div>
<div class="a" style="left:87.500px;top:195px;width:6px;height:1px;background:#a8a594;box-shadow:0 2px 0 #a8a594"></div>
<div class="a cb" style="left:101px;top:194px"></div>
<div class="t" style="left:112px;top:192.5px;font-size:6.800px;color:#000">GroupHeader1</div>
<div class="a" style="left:98px;top:204px;width:550px;height:16px;background-color:#fff;background-image:radial-gradient(circle at 1px 1px,#c9c9c9 0,#c9c9c9 .4px,transparent .8px);background-size:3.819px 3.819px;background-position:-1px 2.82px"></div>
<div class="a" style="left:159.1px;top:204px;width:1px;height:16px;background:#f1f0e8"></div>
<div class="a" style="left:220.2px;top:204px;width:1px;height:16px;background:#f1f0e8"></div>
<div class="a" style="left:281.3px;top:204px;width:1px;height:16px;background:#f1f0e8"></div>
<div class="a" style="left:342.4px;top:204px;width:1px;height:16px;background:#f1f0e8"></div>
<div class="a" style="left:403.5px;top:204px;width:1px;height:16px;background:#f1f0e8"></div>
<div class="a" style="left:464.6px;top:204px;width:1px;height:16px;background:#f1f0e8"></div>
<div class="a" style="left:525.7px;top:204px;width:1px;height:16px;background:#f1f0e8"></div>
<div class="a" style="left:586.8px;top:204px;width:1px;height:16px;background:#f1f0e8"></div>
<div class="a bh" style="left:96.500px;top:220px;width:551.5px;height:13px"></div>
<div class="a bhl" style="left:85.500px;top:220px;width:10px;height:13px"></div>
<div class="a" style="left:87.500px;top:224px;width:6px;height:1px;background:#a8a594;box-shadow:0 2px 0 #a8a594"></div>
<div class="a cb" style="left:101px;top:223px"></div>
<div class="a" style="left:111px;top:222px;width:6px;height:9px;background:#fbfaf3;border-left:1px solid #d4d0c0;border-right:1px solid #d4d0c0"></div>
<div class="t" style="left:122px;top:221.5px;font-size:6.800px;color:#000">Detail</div>
<div class="a" style="left:98px;top:233px;width:550px;height:16.5px;background-color:#fff;background-image:radial-gradient(circle at 1px 1px,#c9c9c9 0,#c9c9c9 .4px,transparent .8px);background-size:3.819px 3.819px;background-position:-1px 2.82px"></div>
<div class="a" style="left:159.1px;top:233px;width:1px;height:16.5px;background:#f1f0e8"></div>
<div class="a" style="left:220.2px;top:233px;width:1px;height:16.5px;background:#f1f0e8"></div>
<div class="a" style="left:281.3px;top:233px;width:1px;height:16.5px;background:#f1f0e8"></div>
<div class="a" style="left:342.4px;top:233px;width:1px;height:16.5px;background:#f1f0e8"></div>
<div class="a" style="left:403.5px;top:233px;width:1px;height:16.5px;background:#f1f0e8"></div>
<div class="a" style="left:464.6px;top:233px;width:1px;height:16.5px;background:#f1f0e8"></div>
<div class="a" style="left:525.7px;top:233px;width:1px;height:16.5px;background:#f1f0e8"></div>
<div class="a" style="left:586.8px;top:233px;width:1px;height:16.5px;background:#f1f0e8"></div>
<div class="a bh" style="left:96.500px;top:249.5px;width:551.5px;height:12.5px"></div>
<div class="a bhl" style="left:85.500px;top:249.5px;width:10px;height:12.5px"></div>
<div class="a" style="left:87.500px;top:253.5px;width:6px;height:1px;background:#a8a594;box-shadow:0 2px 0 #a8a594"></div>
<div class="a cb" style="left:101px;top:252.5px"></div>
<div class="t" style="left:112px;top:251.0px;font-size:6.800px;color:#000">GroupFooter1</div>
<div class="a bh" style="left:96.500px;top:262px;width:551.5px;height:12px"></div>
<div class="a bhl" style="left:85.500px;top:262px;width:10px;height:12px"></div>
<div class="a" style="left:87.500px;top:266px;width:6px;height:1px;background:#a8a594;box-shadow:0 2px 0 #a8a594"></div>
<div class="a cb" style="left:101px;top:265px"></div>
<div class="t" style="left:112px;top:263.5px;font-size:6.800px;color:#000">PageFooter</div>
<div class="a" style="left:98px;top:274px;width:550px;height:16px;background-color:#fff;background-image:radial-gradient(circle at 1px 1px,#c9c9c9 0,#c9c9c9 .4px,transparent .8px);background-size:3.819px 3.819px;background-position:-1px 2.82px"></div>
<div class="a" style="left:159.1px;top:274px;width:1px;height:16px;background:#f1f0e8"></div>
<div class="a" style="left:220.2px;top:274px;width:1px;height:16px;background:#f1f0e8"></div>
<div class="a" style="left:281.3px;top:274px;width:1px;height:16px;background:#f1f0e8"></div>
<div class="a" style="left:342.4px;top:274px;width:1px;height:16px;background:#f1f0e8"></div>
<div class="a" style="left:403.5px;top:274px;width:1px;height:16px;background:#f1f0e8"></div>
<div class="a" style="left:464.6px;top:274px;width:1px;height:16px;background:#f1f0e8"></div>
<div class="a" style="left:525.7px;top:274px;width:1px;height:16px;background:#f1f0e8"></div>
<div class="a" style="left:586.8px;top:274px;width:1px;height:16px;background:#f1f0e8"></div>
<div class="a bh" style="left:96.500px;top:290px;width:551.5px;height:12px"></div>
<div class="a bhl" style="left:85.500px;top:290px;width:10px;height:12px"></div>
<div class="a" style="left:87.500px;top:294px;width:6px;height:1px;background:#a8a594;box-shadow:0 2px 0 #a8a594"></div>
<div class="a cb" style="left:101px;top:293px"></div>
<div class="t" style="left:112px;top:291.5px;font-size:6.800px;color:#000">ReportFooter</div>
<div class="a" style="left:98px;top:302px;width:550px;height:16px;background-color:#fff;background-image:radial-gradient(circle at 1px 1px,#c9c9c9 0,#c9c9c9 .4px,transparent .8px);background-size:3.819px 3.819px;background-position:-1px 2.82px"></div>
<div class="a" style="left:159.1px;top:302px;width:1px;height:16px;background:#f1f0e8"></div>
<div class="a" style="left:220.2px;top:302px;width:1px;height:16px;background:#f1f0e8"></div>
<div class="a" style="left:281.3px;top:302px;width:1px;height:16px;background:#f1f0e8"></div>
<div class="a" style="left:342.4px;top:302px;width:1px;height:16px;background:#f1f0e8"></div>
<div class="a" style="left:403.5px;top:302px;width:1px;height:16px;background:#f1f0e8"></div>
<div class="a" style="left:464.6px;top:302px;width:1px;height:16px;background:#f1f0e8"></div>
<div class="a" style="left:525.7px;top:302px;width:1px;height:16px;background:#f1f0e8"></div>
<div class="a" style="left:586.8px;top:302px;width:1px;height:16px;background:#f1f0e8"></div>
<!-- faint control outlines -->
<div class="a ol" style="left:98px;top:131px;width:270px;height:15px"></div>
<div class="a ol" style="left:375px;top:131px;width:271px;height:15px"></div>
<div class="a ol" style="left:98px;top:147px;width:270px;height:9px"></div>
<div class="a ol" style="left:523px;top:147px;width:123px;height:8px"></div>
<div class="a ol" style="left:523px;top:155px;width:123px;height:8px"></div>
<div class="a ol" style="left:101px;top:209px;width:55px;height:9px"></div>
<div class="a ol" style="left:166px;top:209px;width:296px;height:9px"></div>
<!-- detail outlines -->
<div class="a ol" style="left:220px;top:233px;width:52px;height:8px;border-bottom:none"></div>
<div class="a ol" style="left:273px;top:233px;width:64px;height:8px;border-bottom:none"></div>
<div class="a ol" style="left:342px;top:233px;width:58px;height:8px;border-bottom:none"></div>
<div class="a ol" style="left:403px;top:233px;width:67px;height:8px;border-bottom:none"></div>
<div class="a ol" style="left:473px;top:233px;width:38px;height:8px;border-bottom:none"></div>
<div class="a ol" style="left:536px;top:233px;width:40px;height:8px;border-bottom:none"></div>
<div class="a ol" style="left:592px;top:233px;width:42px;height:8px;border-bottom:none"></div>
<!-- page header texts -->
<div class="t" style="left:99px;top:131.500px;font-size:12px;font-weight:bold;line-height:15px;letter-spacing:-.05px">Inventory Item</div>
<div class="t" style="left:99px;top:146px;font-size:6.800px;font-style:italic;line-height:9px;color:#222">Date Range: All Dates</div>
<div class="t" style="right:174px;top:131.500px;font-size:9px;font-weight:bold;line-height:11px;color:#111">Company Name</div>
<div class="t" style="right:173px;top:146px;font-size:6.800px;font-style:italic;line-height:9px;color:#222">PrintedDate</div>
<div class="t" style="right:173px;top:154.500px;font-size:6.800px;font-style:italic;line-height:9px;color:#222">PrintedTime</div>
<!-- column header bar -->
<div class="a" style="left:98px;top:176px;width:548px;height:13px;background:#dbdbdb;border-top:1px solid #444;border-bottom:1px solid #555;border-left:1px solid #666;border-right:1px solid #888;box-shadow:0 1px 0 #aaa"></div>
<div class="t hd" style="left:98.500px">Product ID</div>
<div class="t hd" style="left:163px">Description</div>
<div class="t hd" style="left:221px">Item Type</div>
<div class="t hd" style="left:274.500px">Classification</div>
<div class="t hd" style="left:339px">Category</div>
<div class="t hd" style="left:404px">Class Code</div>
<div class="t hd" style="left:475px">Average Cost</div>
<div class="t hd" style="left:537px">Current Cost</div>
<div class="t hd" style="left:597px">Sales Price</div>
<!-- group header -->
<div class="t" style="left:102px;top:209px;font-size:7.300px;font-weight:bold;line-height:9px;letter-spacing:-.1px">strProductID</div>
<div class="t" style="left:167px;top:209px;font-size:7.300px;font-weight:bold;line-height:9px;height:8px;overflow:hidden">strDescription</div>
<!-- detail -->
<div class="t dt" style="left:221px">strItemType</div>
<div class="t dt" style="left:274.500px">strClassification</div>
<div class="t dt" style="left:343px">strCategory</div>
<div class="t dt" style="left:404px">strItemClass</div>
<div class="t dt" style="left:474.500px">dblAverage</div>
<div class="t dt" style="left:537px">dblCurrentC</div>
<div class="t dt" style="left:594px">dblSalesPric</div>
<div class="a" style="left:98px;top:241px;width:545px;height:1px;background:#333"></div>
<div class="a" style="left:98px;top:307px;width:545px;height:1px;background:#333"></div>
<!-- left ruler ticks -->
<svg style="left:85px;top:105px" width="12" height="220"><rect x="4.0" y="32.3" width="3" height="1" fill="#222"/><rect x="5" y="39.9" width="1.300" height="1.300" fill="#222"/><rect x="5" y="47.4" width="1.300" height="1.300" fill="#222"/><rect x="3.2" y="55.3" width="4.5" height="1" fill="#222"/><rect x="5" y="62.8" width="1.300" height="1.300" fill="#222"/><rect x="5" y="70.4" width="1.300" height="1.300" fill="#222"/><rect x="4.0" y="78.2" width="3" height="1" fill="#222"/><rect x="5" y="84.4" width="1.300" height="1.300" fill="#222"/><rect x="4.0" y="108.0" width="3" height="1" fill="#222"/><rect x="4.0" y="134.8" width="3" height="1" fill="#222"/><rect x="5" y="142.2" width="1.300" height="1.300" fill="#222"/><rect x="4.0" y="176.5" width="3" height="1" fill="#222"/><rect x="4.0" y="204.5" width="3" height="1" fill="#222"/><rect x="5" y="211.7" width="1.300" height="1.300" fill="#222"/></svg>


<div class="a" style="left:672px;top:90px;width:146px;height:529px;background:#c6d6f8"></div>
<div class="a" style="left:673px;top:91px;width:143px;height:147px;background:#fff;border:1px solid #9db3e6"></div>
<div class="a" style="left:675px;top:92px;width:140px;height:10.500px;background:#074ce0"></div>
<div class="t" style="left:677px;top:93px;color:#c9d9fb;font-size:6.800px">Explorer</div>
<svg style="left:789px;top:93px" width="26" height="9"><rect x="1" y="1.500" width="4.500" height="4.500" fill="none" stroke="#e8eefc" stroke-width=".9"/><rect x=".5" y="1" width="5.500" height="1.500" fill="#e8eefc"/><path d="M10.500 1 H13 V4.500 H10.500Z M9.500 4.800 H14 M11.750 5 V7.500" stroke="#e8eefc" stroke-width=".9" fill="none"/><path d="M19 1.500 L23.500 6.500 M23.500 1.500 L19 6.500" stroke="#fff" stroke-width="1.300"/></svg>
<div class="a" style="left:684px;top:113px;width:1px;height:98px;background:repeating-linear-gradient(#cfcfcf 0,#cfcfcf 1px,transparent 1px,transparent 2px)"></div>
<div class="a" style="left:696px;top:114px;width:1px;height:67px;background:repeating-linear-gradient(#cfcfcf 0,#cfcfcf 1px,transparent 1px,transparent 2px)"></div>
<svg style="left:681px;top:106px" width="7" height="7"><rect x=".5" y=".5" width="5.500" height="5.500" fill="#fff" stroke="#8a9ab8" stroke-width=".9"/><path d="M1.800 3.250 H4.800" stroke="#000" stroke-width=".9"/></svg>
<svg style="left:692px;top:104.500px" width="8" height="9"><path d="M.5 .5 H5 L7 2.500 V8.500 H.5Z" fill="#fff" stroke="#5a78c8" stroke-width=".8"/><rect x="2.500" y="1" width="2" height="3" fill="#f0a030"/><path d="M2 5.500 H5.500 M2 7 H5.500" stroke="#b8c4e0" stroke-width=".6"/></svg>
<div class="t" style="left:703.8px;top:105px;font-size:6.800px;color:#111;">Report</div>
<div class="a" style="left:697px;top:119px;width:6px;height:1px;background:repeating-linear-gradient(90deg,#cfcfcf 0,#cfcfcf 1px,transparent 1px,transparent 2px)"></div>
<svg style="left:704px;top:116.5px" width="7" height="5"><rect x="0" y="0" width="6.500" height="4.500" fill="#4a8ae0"/><rect x="0" y="1.500" width="6.500" height="1.200" fill="#b8d4f6"/><rect x="0" y="3.200" width="6.500" height="1.300" fill="#3a74d0"/></svg>
<div class="t" style="left:716px;top:115px;font-size:6.800px;color:#111;">ReportHeader</div>
<div class="a" style="left:697px;top:129px;width:6px;height:1px;background:repeating-linear-gradient(90deg,#cfcfcf 0,#cfcfcf 1px,transparent 1px,transparent 2px)"></div>
<svg style="left:704px;top:126.5px" width="7" height="5"><rect x="0" y="0" width="6.500" height="4.500" fill="#4a8ae0"/><rect x="0" y="1.500" width="6.500" height="1.200" fill="#b8d4f6"/><rect x="0" y="3.200" width="6.500" height="1.300" fill="#3a74d0"/></svg>
<div class="t" style="left:716px;top:125px;font-size:6.800px;color:#111;">PageHeader</div>
<div class="a" style="left:697px;top:139px;width:6px;height:1px;background:repeating-linear-gradient(90deg,#cfcfcf 0,#cfcfcf 1px,transparent 1px,transparent 2px)"></div>
<svg style="left:704px;top:136.5px" width="7" height="5"><rect x="0" y="0" width="6.500" height="4.500" fill="#4a8ae0"/><rect x="0" y="1.500" width="6.500" height="1.200" fill="#b8d4f6"/><rect x="0" y="3.200" width="6.500" height="1.300" fill="#3a74d0"/></svg>
<div class="t" style="left:716px;top:135px;font-size:6.800px;color:#111;">GroupHeader1</div>
<div class="a" style="left:697px;top:149px;width:6px;height:1px;background:repeating-linear-gradient(90deg,#cfcfcf 0,#cfcfcf 1px,transparent 1px,transparent 2px)"></div>
<svg style="left:704px;top:146.8px" width="7" height="5"><rect x="0" y="0" width="6.500" height="4.500" fill="#4a8ae0"/><rect x="0" y="1.500" width="6.500" height="1.200" fill="#b8d4f6"/><rect x="0" y="3.200" width="6.500" height="1.300" fill="#3a74d0"/></svg>
<div class="t" style="left:716px;top:145px;font-size:6.800px;color:#111;">Detail</div>
<div class="a" style="left:697px;top:160px;width:6px;height:1px;background:repeating-linear-gradient(90deg,#cfcfcf 0,#cfcfcf 1px,transparent 1px,transparent 2px)"></div>
<svg style="left:704px;top:157.5px" width="7" height="5"><rect x="0" y="0" width="6.500" height="4.500" fill="#4a8ae0"/><rect x="0" y="1.500" width="6.500" height="1.200" fill="#b8d4f6"/><rect x="0" y="3.200" width="6.500" height="1.300" fill="#3a74d0"/></svg>
<div class="t" style="left:716px;top:156px;font-size:6.800px;color:#111;">GroupFooter1</div>
<div class="a" style="left:697px;top:170px;width:6px;height:1px;background:repeating-linear-gradient(90deg,#cfcfcf 0,#cfcfcf 1px,transparent 1px,transparent 2px)"></div>
<svg style="left:704px;top:167.5px" width="7" height="5"><rect x="0" y="0" width="6.500" height="4.500" fill="#4a8ae0"/><rect x="0" y="1.500" width="6.500" height="1.200" fill="#b8d4f6"/><rect x="0" y="3.200" width="6.500" height="1.300" fill="#3a74d0"/></svg>
<div class="t" style="left:716px;top:166px;font-size:6.800px;color:#111;">PageFooter</div>
<div class="a" style="left:697px;top:180px;width:6px;height:1px;background:repeating-linear-gradient(90deg,#cfcfcf 0,#cfcfcf 1px,transparent 1px,transparent 2px)"></div>
<svg style="left:704px;top:177.8px" width="7" height="5"><rect x="0" y="0" width="6.500" height="4.500" fill="#4a8ae0"/><rect x="0" y="1.500" width="6.500" height="1.200" fill="#b8d4f6"/><rect x="0" y="3.200" width="6.500" height="1.300" fill="#3a74d0"/></svg>
<div class="t" style="left:716px;top:176px;font-size:6.800px;color:#111;">ReportFooter</div>
<svg style="left:681px;top:187px" width="7" height="7"><rect x=".5" y=".5" width="5.500" height="5.500" fill="#fff" stroke="#8a9ab8" stroke-width=".9"/><path d="M1.800 3.250 H4.800 M3.250 1.800 V4.800" stroke="#000" stroke-width=".9"/></svg>
<svg style="left:690px;top:185.500px" width="11" height="9"><rect x=".5" y=".5" width="10" height="8" fill="#f4f6fc" stroke="#4a68c0" stroke-width=".9"/><path d="M4 .5 V8.500 M7.500 .5 V8.500" stroke="#4a68c0" stroke-width=".7"/></svg>
<div class="t" style="left:703.8px;top:186px;font-size:6.800px;color:#111;">Fields</div>
<div class="a" style="left:685px;top:200px;width:5px;height:1px;background:repeating-linear-gradient(90deg,#cfcfcf 0,#cfcfcf 1px,transparent 1px,transparent 2px)"></div>
<svg style="left:690px;top:196px" width="11" height="9"><rect x=".5" y=".5" width="10" height="8" fill="#f4f6fc" stroke="#6a84c8" stroke-width=".9"/><path d="M3 .5 V8.500" stroke="#6a84c8" stroke-width=".7"/><path d="M5 4.500 L7 3 L9 4.500 L7 6Z" fill="none" stroke="#555" stroke-width=".6"/></svg>
<div class="t" style="left:703.8px;top:196px;font-size:6.800px;color:#111;">Parameters</div>
<div class="a" style="left:685px;top:210px;width:6px;height:1px;background:repeating-linear-gradient(90deg,#cfcfcf 0,#cfcfcf 1px,transparent 1px,transparent 2px)"></div>
<svg style="left:692px;top:206px" width="9" height="9"><path d="M.5 .5 H5 L7 2.500 V8.500 H.5Z" fill="#fff" stroke="#4a68c0" stroke-width=".8"/><rect x="3" y="4" width="5" height="3" fill="#e85818"/><path d="M2 3 H5" stroke="#e89838" stroke-width=".8"/></svg>
<div class="t" style="left:703.8px;top:206px;font-size:6.800px;color:#111;">Settings</div>
<div class="a" style="left:673px;top:239px;width:143px;height:380px;background:#ece9d8;border:1px solid #9db3e6"></div>
<div class="a" style="left:675px;top:240px;width:140px;height:11px;background:#074ce0"></div>
<div class="t" style="left:677px;top:241px;color:#c9d9fb;font-size:6.800px">Properties</div>
<svg style="left:789px;top:241px" width="26" height="9"><rect x="1" y="1.500" width="4.500" height="4.500" fill="none" stroke="#e8eefc" stroke-width=".9"/><rect x=".5" y="1" width="5.500" height="1.500" fill="#e8eefc"/><path d="M10.500 1 H13 V4.500 H10.500Z M9.500 4.800 H14 M11.750 5 V7.500" stroke="#e8eefc" stroke-width=".9" fill="none"/><path d="M19 1.500 L23.500 6.500 M23.500 1.500 L19 6.500" stroke="#fff" stroke-width="1.300"/></svg>
<div class="a" style="left:675px;top:251px;width:140px;height:13px;background:#fff;border-bottom:1px solid #b8c4dc"></div>
<div class="t" style="left:677px;top:253px;font-size:7px;color:#111">ARNet Document</div>
<div class="a" style="left:805px;top:252px;width:10px;height:11px;background:linear-gradient(#d5e0fb,#b9c9f3);border-radius:1px"></div>
<svg style="left:807px;top:255px" width="6" height="5"><path d="M.5 .8 L3 3.500 L5.500 .8" stroke="#4a5f9a" stroke-width="1.300" fill="none"/></svg>
<div class="a" style="left:677px;top:266px;width:13px;height:13px;background:#fff;border:1px solid #7f9bd6;border-radius:1px"></div>
<svg style="left:679px;top:268px" width="10" height="10"><rect x="0" y="0" width="3" height="3" fill="#fff" stroke="#333" stroke-width=".6"/><rect x="0" y="5.500" width="3" height="3" fill="#fff" stroke="#333" stroke-width=".6"/><path d="M4.500 1 H8 M5.500 3 H8.500 M4.500 6.500 H8 M5.500 8.500 H8.500" stroke="#6a8ac8" stroke-width=".8"/></svg>
<svg style="left:692px;top:267px" width="12" height="12"><text x="0" y="5.500" font-size="6.500" font-weight="bold" fill="#2a4ac8" font-family="Liberation Serif,serif">A</text><text x="0" y="11" font-size="6.500" font-weight="bold" fill="#c82a2a" font-family="Liberation Serif,serif">Z</text><path d="M8 1 V9.500 M6.500 7.500 L8 10 L9.500 7.500" stroke="#111" stroke-width=".9" fill="none"/></svg>
<div class="a" style="left:707px;top:267px;width:1px;height:12px;background:#c5c2b2"></div>
<svg style="left:711px;top:268px" width="11" height="10"><rect x=".5" y=".5" width="10" height="8.500" fill="#e4e1d2" stroke="#b8b5a5" stroke-width=".8"/><path d="M.5 3 H10.500 M.5 6 H10.500 M4 3 V9" stroke="#b8b5a5" stroke-width=".7"/></svg>
<div class="a" style="left:675px;top:282px;width:140px;height:276px;background:#fff"></div>
<div class="a" style="left:675px;top:282px;width:9px;height:238px;background:#d8d5c6"></div>
<div class="a" style="left:675px;top:282px;width:140px;height:11px;background:#d8d5c6"></div>
<svg style="left:676.500px;top:284px" width="7" height="7"><rect x=".5" y=".5" width="5.500" height="5.500" fill="#fff" stroke="#333" stroke-width=".9"/><path d="M1.800 3.250 H4.800" stroke="#000" stroke-width=".9"/></svg>
<div class="t" style="left:686px;top:283px;font-size:7.600px;font-weight:bold;color:#111">Appearance</div>
<div class="a" style="left:684px;top:303px;width:131px;height:1px;background:#e4e1d6"></div>
<div class="t" style="left:686px;top:294px;font-size:6.800px;color:#111;width:52px;overflow:hidden">ShowParameterL</div>
<div class="t" style="left:740.500px;top:294px;font-size:7px;color:#111;width:74.500px;overflow:hidden">True</div>
<div class="a" style="left:684px;top:313px;width:131px;height:1px;background:#e4e1d6"></div>
<div class="t" style="left:686px;top:305px;font-size:6.800px;color:#111;width:52px;overflow:hidden">Watermark</div>
<div class="a" style="left:740px;top:305px;width:13px;height:8px;background:#fff;border:1px solid #333"></div>
<div class="t" style="left:757px;top:305px;font-size:7px;color:#111">(none)</div>
<div class="a" style="left:684px;top:324px;width:131px;height:1px;background:#e4e1d6"></div>
<div class="t" style="left:686px;top:315px;font-size:6.800px;color:#111;width:52px;overflow:hidden">WatermarkAlignn</div>
<div class="t" style="left:740.500px;top:315px;font-size:7px;color:#111;width:74.500px;overflow:hidden">Center</div>
<div class="a" style="left:684px;top:335px;width:131px;height:1px;background:#e4e1d6"></div>
<div class="t" style="left:686px;top:326px;font-size:6.800px;color:#111;width:52px;overflow:hidden">WatermarkPrintC</div>
<div class="a" style="left:684px;top:346px;width:131px;height:1px;background:#e4e1d6"></div>
<div class="t" style="left:686px;top:337px;font-size:6.800px;color:#111;width:52px;overflow:hidden">WatermarkSizeM</div>
<div class="t" style="left:740.500px;top:337px;font-size:7px;color:#111;width:74.500px;overflow:hidden">Clip</div>
<div class="a" style="left:675px;top:347px;width:140px;height:11px;background:#d8d5c6"></div>
<svg style="left:676.500px;top:349px" width="7" height="7"><rect x=".5" y=".5" width="5.500" height="5.500" fill="#fff" stroke="#333" stroke-width=".9"/><path d="M1.800 3.250 H4.800" stroke="#000" stroke-width=".9"/></svg>
<div class="t" style="left:686px;top:348px;font-size:7.600px;font-weight:bold;color:#111">Behavior</div>
<div class="a" style="left:684px;top:368px;width:131px;height:1px;background:#e4e1d6"></div>
<div class="t" style="left:686px;top:359px;font-size:6.800px;color:#111;width:52px;overflow:hidden">MaxPages</div>
<div class="t" style="left:740.500px;top:359px;font-size:7px;color:#111;width:74.500px;overflow:hidden">0</div>
<div class="a" style="left:684px;top:378px;width:131px;height:1px;background:#e4e1d6"></div>
<div class="t" style="left:686px;top:370px;font-size:6.800px;color:#111;width:52px;overflow:hidden">PrintWidth</div>
<div class="t" style="left:740.500px;top:370px;font-size:7px;color:#111;width:74.500px;overflow:hidden"><b style="font-size:7.500px">8.979</b></div>
<div class="a" style="left:684px;top:389px;width:131px;height:1px;background:#e4e1d6"></div>
<div class="t" style="left:686px;top:380px;font-size:6.800px;color:#111;width:52px;overflow:hidden">ScriptLanguage</div>
<div class="t" style="left:740.500px;top:380px;font-size:7px;color:#111;width:74.500px;overflow:hidden">C#</div>
<div class="a" style="left:675px;top:390px;width:140px;height:11px;background:#d8d5c6"></div>
<svg style="left:676.500px;top:392px" width="7" height="7"><rect x=".5" y=".5" width="5.500" height="5.500" fill="#fff" stroke="#333" stroke-width=".9"/><path d="M1.800 3.250 H4.800" stroke="#000" stroke-width=".9"/></svg>
<div class="t" style="left:686px;top:391px;font-size:7.600px;font-weight:bold;color:#111">Data</div>
<div class="a" style="left:684px;top:411px;width:131px;height:1px;background:#e4e1d6"></div>
<div class="t" style="left:686px;top:402px;font-size:6.800px;color:#111;width:52px;overflow:hidden">DataMember</div>
<div class="t" style="left:740.500px;top:402px;font-size:7px;color:#111;width:74.500px;overflow:hidden"><b style="font-size:7.500px">Report RecordSource</b></div>
<div class="a" style="left:684px;top:422px;width:131px;height:1px;background:#e4e1d6"></div>
<div class="t" style="left:686px;top:413px;font-size:6.800px;color:#111;width:52px;overflow:hidden">DataSource</div>
<svg style="left:676.500px;top:414px" width="7" height="7"><rect x=".5" y=".5" width="5.500" height="5.500" fill="#fff" stroke="#333" stroke-width=".9"/><path d="M1.800 3.250 H4.800 M3.250 1.800 V4.800" stroke="#000" stroke-width=".9"/></svg>
<div class="t" style="left:740.500px;top:413px;font-size:7px;color:#111;width:74.500px;overflow:hidden"><b style="font-size:7.500px">System.Data.DataSet</b></div>
<div class="a" style="left:684px;top:433px;width:131px;height:1px;background:#e4e1d6"></div>
<div class="t" style="left:686px;top:424px;font-size:6.800px;color:#111;width:52px;overflow:hidden">UserData</div>
<div class="a" style="left:675px;top:434px;width:140px;height:10px;background:#d8d5c6"></div>
<svg style="left:676.500px;top:436px" width="7" height="7"><rect x=".5" y=".5" width="5.500" height="5.500" fill="#fff" stroke="#333" stroke-width=".9"/><path d="M1.800 3.250 H4.800" stroke="#000" stroke-width=".9"/></svg>
<div class="t" style="left:686px;top:435px;font-size:7.600px;font-weight:bold;color:#111">Design</div>
<div class="a" style="left:684px;top:454px;width:131px;height:1px;background:#e4e1d6"></div>
<div class="t" style="left:686px;top:445px;font-size:6.800px;color:#111;width:52px;overflow:hidden">TrayHeight</div>
<div class="t" style="left:740.500px;top:445px;font-size:7px;color:#111;width:74.500px;overflow:hidden">80</div>
<div class="a" style="left:684px;top:465px;width:131px;height:1px;background:#e4e1d6"></div>
<div class="t" style="left:686px;top:456px;font-size:6.800px;color:#111;width:52px;overflow:hidden">TrayLargeIcon</div>
<div class="t" style="left:740.500px;top:456px;font-size:7px;color:#111;width:74.500px;overflow:hidden"><b style="font-size:7.500px">True</b></div>
<div class="a" style="left:675px;top:466px;width:140px;height:11px;background:#d8d5c6"></div>
<svg style="left:676.500px;top:468px" width="7" height="7"><rect x=".5" y=".5" width="5.500" height="5.500" fill="#fff" stroke="#333" stroke-width=".9"/><path d="M1.800 3.250 H4.800" stroke="#000" stroke-width=".9"/></svg>
<div class="t" style="left:686px;top:467px;font-size:7.600px;font-weight:bold;color:#111">Misc</div>
<div class="a" style="left:684px;top:487px;width:131px;height:1px;background:#e4e1d6"></div>
<div class="t" style="left:686px;top:478px;font-size:6.800px;color:#111;width:52px;overflow:hidden">ExpressionErrorM</div>
<div class="a" style="left:684px;top:498px;width:131px;height:1px;background:#e4e1d6"></div>
<div class="t" style="left:686px;top:489px;font-size:6.800px;color:#111;width:52px;overflow:hidden">Language</div>
<div class="t" style="left:740.500px;top:489px;font-size:7px;color:#111;width:74.500px;overflow:hidden">(Default)</div>
<div class="a" style="left:684px;top:508px;width:131px;height:1px;background:#e4e1d6"></div>
<div class="t" style="left:686px;top:500px;font-size:6.800px;color:#111;width:52px;overflow:hidden">Localizable</div>
<div class="t" style="left:740.500px;top:500px;font-size:7px;color:#111;width:74.500px;overflow:hidden">False</div>
<div class="a" style="left:684px;top:519px;width:131px;height:1px;background:#e4e1d6"></div>
<div class="t" style="left:686px;top:510px;font-size:6.800px;color:#9a9a9a;width:52px;overflow:hidden">Version</div>
<div class="t" style="left:740.500px;top:510px;font-size:7px;color:#9a9a9a;width:74.500px;overflow:hidden">5.2.1.516</div>
<div class="a" style="left:738px;top:282px;width:1px;height:238px;background:#e0ddd0"></div>
<div class="a" style="left:738px;top:282px;width:1px;height:11px;background:#d8d5c6"></div>
<div class="a" style="left:738px;top:347px;width:1px;height:11px;background:#d8d5c6"></div>
<div class="a" style="left:738px;top:390px;width:1px;height:11px;background:#d8d5c6"></div>
<div class="a" style="left:738px;top:434px;width:1px;height:10px;background:#d8d5c6"></div>
<div class="a" style="left:738px;top:466px;width:1px;height:11px;background:#d8d5c6"></div>
<div class="a" style="left:675px;top:558px;width:140px;height:1px;background:#c5c2b2"></div>
<div class="t" style="left:678.500px;top:563px;font-size:7px;color:#1a1ae8;text-decoration:underline">Edit Data Source...</div>
<div class="a" style="left:675px;top:579px;width:140px;height:1px;background:#c5c2b2"></div>
<div class="t" style="left:678.500px;top:582.500px;font-size:7.600px;font-weight:bold;color:#111">Appearance</div>
<!-- tab strip -->
<div class="a" style="left:84px;top:601px;width:588px;height:18px;background:#fbfaf2"></div>
<div class="a" style="left:84px;top:601px;width:588px;height:3px;background:#f0eee2;border-bottom:1px solid #dcd9ca"></div>
<div class="a" style="left:88px;top:603px;width:43px;height:15px;background:#ece9d8;border-left:1px solid #fff;border-right:1px solid #8a8778;border-bottom:1px solid #8a8778"></div>
<svg style="left:89px;top:606px" width="10" height="10"><path d="M3 .5 H7 L9.500 2.500 V9 H3Z" fill="#eef2fc" stroke="#4a68d0" stroke-width=".9"/><path d="M0 9.800 L2.200 2.500 L4 9.800Z" fill="#e87818"/><path d="M1.500 9.800 L3.500 4 L5 9.800Z" fill="#f0a030" opacity=".8"/></svg>
<div class="t" style="left:101.500px;top:607px;font-size:6.700px;color:#111">Designer</div>
<svg style="left:136px;top:606px" width="7" height="10"><path d="M2 1 C5 0 6 2 4.500 3.500 C2 5 1 6.500 3 8 C4.500 9 6 8 6 6.500 C6 4.500 3 4.500 2 2.500Z" fill="#fff" stroke="#4a68d8" stroke-width=".9"/></svg>
<div class="t" style="left:147px;top:607px;font-size:6.700px;color:#9a9a9a">Script</div>
<div class="a" style="left:167px;top:606px;width:1px;height:10px;background:#a5a5a5"></div>
<svg style="left:171px;top:606px" width="8" height="10"><path d="M.5 .5 H4.500 L6.500 2.500 V8.500 H.5Z" fill="#fff" stroke="#4a68c0" stroke-width=".8"/><circle cx="4" cy="5" r="1.800" fill="#c8e0f8" stroke="#4a68c0" stroke-width=".7"/><path d="M5.300 6.500 L7.500 9" stroke="#e87818" stroke-width="1.200"/></svg>
<div class="t" style="left:182px;top:607px;font-size:6.700px;color:#9a9a9a">Preview</div>
<div class="a" style="left:209px;top:606px;width:1px;height:10px;background:#a5a5a5"></div>
<!-- status bar -->
<div class="a" style="left:1px;top:619px;width:817px;height:12px;background:#ece9d8;border-top:1px solid #f4f3ea"></div>
<div class="t" style="left:8px;top:622px;font-size:6.800px;color:#111">Ready</div>
<div class="t" style="left:556.500px;top:622px;font-size:6.800px;color:#111">New</div>
<div class="t" style="left:584.500px;top:622px;font-size:7px;color:#111">Layout: New Report Layout</div>
<div class="t" style="left:684px;top:622px;font-size:7px;color:#111">Data Source: None</div>
<div class="t" style="left:757.500px;top:622px;font-size:7px;color:#111">Open Reports: 1</div>
<div class="a ss" style="left:551px"></div><div class="a ss" style="left:578px"></div><div class="a ss" style="left:677px"></div><div class="a ss" style="left:750px"></div>
<div class="a" style="left:1px;top:630px;width:817px;height:3px;background:linear-gradient(#3472e2,#1c66de 50%,#2a70e4)"></div>
<div class="a" style="left:0;top:633px;width:818px;height:2px;background:#fafbff"></div>

<div class="a" style="left:817px;top:16px;width:1px;height:619px;background:#f4f7fe"></div>

<div class="a" style="left:289px;top:257px;width:239px;height:118px;background:#0836cf;border-radius:4px 4px 0 0"></div>
<div class="a" style="left:289px;top:257px;width:239px;height:19px;border-radius:4px 4px 0 0;background:linear-gradient(#2a78f0 0,#0a5ae8 3px,#0855e4 9px,#0650dc 14px,#0448cc 19px)"></div>
<svg style="left:293px;top:262.500px" width="9" height="9"><circle cx="4.500" cy="4.500" r="4" fill="#8f6a3a" stroke="#e8dcb8" stroke-width=".9"/><path d="M2.800 2.300 L7 4.500 L2.800 6.700Z" fill="#ffb400"/><circle cx="4" cy="4.500" r="1.100" fill="#fff6c0"/></svg>
<div class="t" style="left:304.500px;top:261.500px;font-size:8.500px;font-weight:bold;color:#fff;letter-spacing:-.33px;line-height:11px;transform:scaleY(1.1);transform-origin:0 60%">Save Report As</div>
<div class="a" style="left:512px;top:261px;width:13px;height:13px;border-radius:2px;border:1px solid #f4e8e4;background:linear-gradient(135deg,#e8866a,#d8502a 50%,#c03c18)"></div>
<svg style="left:512px;top:261px" width="13" height="13"><path d="M3.500 3.500 L9.500 9.500 M9.500 3.500 L3.500 9.500" stroke="#fff" stroke-width="1.600"/></svg>
<div class="a" style="left:291.500px;top:275.500px;width:234px;height:97px;background:#ece9d8"></div>
<!-- tab page -->
<div class="a" style="left:294px;top:291px;width:229px;height:59px;background:linear-gradient(#fdfdfb,#f6f5ee);border:1px solid #a0a89e"></div>
<div class="a" style="left:294px;top:279px;width:49px;height:13px;background:#fcfcfa;border:1px solid #a0a89e;border-bottom:none;border-top:2px solid #f0a030;border-radius:2px 2px 0 0"></div>
<div class="t" style="left:298px;top:280.500px;font-size:6.800px;color:#111">Report Detail</div>
<div class="t" style="left:302.500px;top:302px;font-size:6.900px;color:#111">Report Name</div>
<div class="t" style="left:302.500px;top:316.500px;font-size:6.900px;color:#111">Report Description</div>
<div class="a" style="left:364px;top:300px;width:150px;height:12px;background:#fff;border:1px solid #aabcd6"></div>
<div class="t" style="left:366px;top:302px;font-size:6.900px;color:#111">Custom1</div>
<div class="a" style="left:364px;top:315px;width:150px;height:25px;background:#fff;border:1px solid #aabcd6"></div>
<div class="t" style="left:367.500px;top:316.500px;font-size:6.700px;color:#111">Sample Customized Report</div>
<div class="a" style="left:502px;top:316px;width:11px;height:23px;background:#f6f5ee"></div>
<svg style="left:502px;top:316px" width="11" height="23"><rect x=".5" y=".5" width="10" height="10.500" rx="1.500" fill="#f3f2ea" stroke="#e9e7db" stroke-width=".8"/><rect x=".5" y="12" width="10" height="10.500" rx="1.500" fill="#f3f2ea" stroke="#e9e7db" stroke-width=".8"/><path d="M3.500 7 L5.500 4.500 L7.500 7 M3.500 16 L5.500 18.500 L7.500 16" stroke="#c9c6b8" stroke-width="1.100" fill="none"/></svg>
<!-- buttons -->
<div class="a" style="left:426px;top:355px;width:46px;height:13px;border-radius:2px;border:1px solid #4a6a9c;background:linear-gradient(#fff,#f4f2e8 70%,#dcd8c8);box-shadow:inset 0 0 0 1px #f0b03c"></div>
<div class="t" style="left:426px;top:357.500px;width:46px;text-align:center;font-size:6.900px;color:#111">Save</div>
<div class="a" style="left:476px;top:355px;width:46px;height:13px;border-radius:2px;border:1px solid #4a6a9c;background:linear-gradient(#fff,#f4f2e8 70%,#dcd8c8)"></div>
<div class="t" style="left:476px;top:357.500px;width:46px;text-align:center;font-size:6.900px;color:#111">Close</div>

</body></html>
